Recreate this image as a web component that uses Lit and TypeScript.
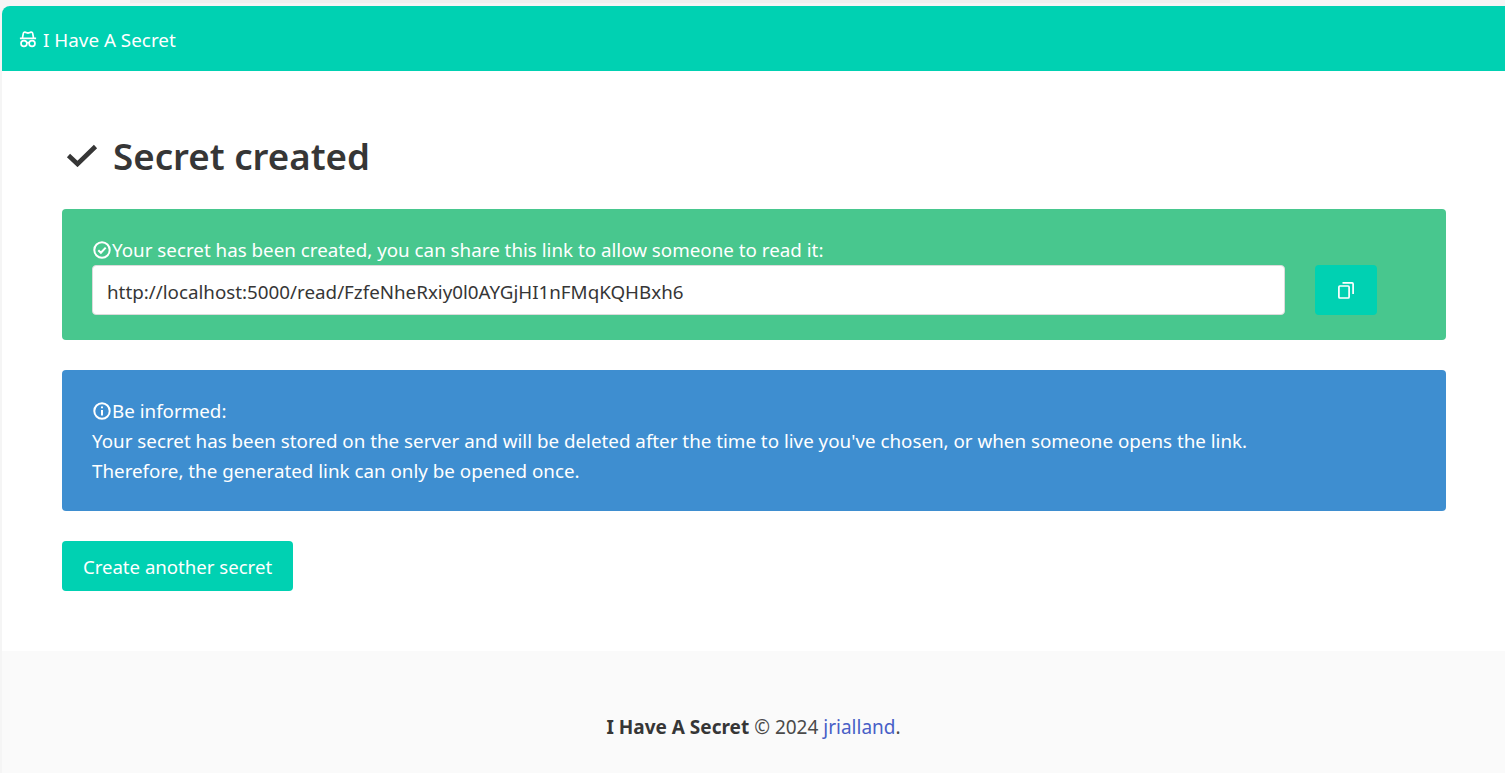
import { LitElement, html, css } from "lit";
import { customElement } from "lit/decorators.js";

@customElement("app-root")
export class AppRoot extends LitElement {
  static styles = css`
    :host { display: block; height: 773px; overflow: hidden; font-family: "Noto Sans", "Open Sans", sans-serif; font-size: 18.8px; line-height: 30px; color: #363636; background: linear-gradient(#efefef, #efefef) 130px 0 / 1100px 3px no-repeat, #f5f5f5; }
    .page { margin: 6px 0 0 2px; display: flex; flex-direction: column; height: 767px; background: #fff; border-radius: 8px 0 0 0; overflow: hidden; }
    .t { position: relative; top: 1px; }
    .nav { height: 65px; flex: none; background: #00d1b2; color: #fff; display: flex; align-items: center; padding-left: 17px; gap: 6px; font-size: 18.85px; }
    .main { flex: 1; padding: 60px 59px 60px 60px; display: flex; flex-direction: column; align-items: stretch; }
    h1 { margin: 0 0 30px; font-size: 36.7px; font-weight: 600; line-height: 50px; height: 48px; display: flex; align-items: center; gap: 15px; color: #363636; padding-left: 4px; }
    .box { border-radius: 4px; color: #fff; padding: 25px 30px; margin-bottom: 30px; }
    .green { background: #48c78e; }
    .blue { background: #3e8ed0; }
    .line { display: flex; align-items: center; height: 30px; }
    .first { height: 31px; }
    .row { display: flex; gap: 30px; padding-right: 39px; }
    .input { flex: 1; height: 50px; box-sizing: border-box; background: #fff; border: 1px solid #dbdbdb; border-radius: 4px; color: #363636; padding: 0 14px; display: flex; align-items: center; }
    .url { position: relative; top: 2px; }
    .btn { background: #00d1b2; color: #fff; border-radius: 4px; height: 50px; display: flex; align-items: center; justify-content: center; }
    .copy { width: 62px; }
    .create { width: 231px; font-size: 18.6px; }
    footer { background: #fafafa; height: 122px; flex: none; padding-top: 61px; box-sizing: border-box; text-align: center; font-size: 19px; color: #4a4a4a; }
    a { color: #485fc7; text-decoration: none; }
    b { font-weight: 700; color: #363636; }
    svg { display: block; flex: none; }
  `;
  render() {
    return html`<div class="page">
      <nav class="nav"><svg width="18" height="18" viewBox="0 0 16 16" fill="none" stroke="#fff" stroke-width="1.5"><path d="M.8 7.4h14.4M3 7.4l.8-4.2C4 2.1 5 1.7 6 2.1l2 .6 2-.6c1-.4 2 0 2.2 1.1l.8 4.2"/><circle cx="4.4" cy="12" r="2.6"/><circle cx="11.6" cy="12" r="2.6"/><path d="M7 11.6c.6-.4 1.4-.4 2 0"/></svg><span class="t">I Have A Secret</span></nav>
      <div class="main">
        <h1><svg width="32" height="24" viewBox="0 0 32 24" fill="none" stroke="#363636" stroke-width="4.6"><path d="M2.5 12.5l9 8.5L29.5 3.5"/></svg><span class="t">Secret created</span></h1>
        <div class="box green">
          <div class="line first"><svg width="20" height="20" viewBox="0 0 20 20" fill="none" stroke="#fff" stroke-width="2"><circle cx="10" cy="10" r="7.7"/><path d="M6.3 10.2l2.6 2.6 4.8-5.2"/></svg><span>Your secret has been created, you can share this link to allow someone to read it:</span></div>
          <div class="row"><div class="input"><span class="url">http://localhost:5000/read/FzfeNheRxiy0l0AYGjHI1nFMqKQHBxh6</span></div><div class="btn copy"><svg width="18" height="18" viewBox="0 0 18 18" fill="none" stroke="#fff" stroke-width="1.7"><rect x="1.9" y="5" width="10.2" height="12" rx="1"/><path d="M5.5 1.9h9.6a1 1 0 0 1 1 1v10.2"/></svg></div></div>
        </div>
        <div class="box blue">
          <div class="line first"><svg width="20" height="20" viewBox="0 0 20 20" fill="none" stroke="#fff" stroke-width="2"><circle cx="10" cy="10" r="7.7"/><path d="M10 9v5.5M10 5.5v1.7"/></svg><span>Be informed:</span></div>
          <div class="line"><span>Your secret has been stored on the server and will be deleted after the time to live you've chosen, or when someone opens the link.</span></div>
          <div class="line"><span>Therefore, the generated link can only be opened once.</span></div>
        </div>
        <div class="btn create"><span class="t">Create another secret</span></div>
      </div>
      <footer><b>I Have A Secret</b> © 2024 <a>jrialland</a>.</footer>
    </div>`;
  }
}
